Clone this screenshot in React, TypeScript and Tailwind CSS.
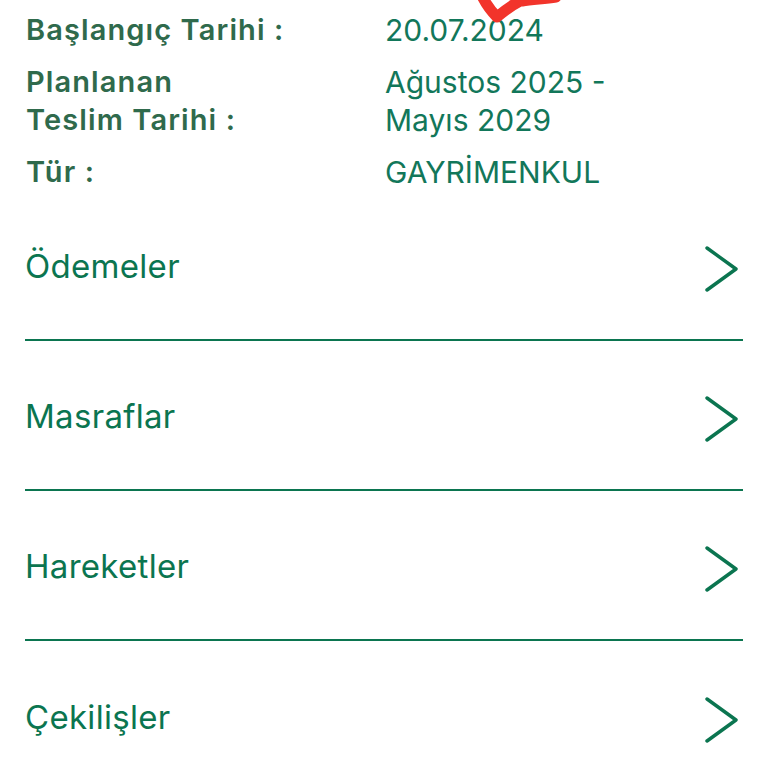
const details = [
  { label: ["Başlangıç Tarihi :"], value: ["20.07.2024"] },
  { label: ["Planlanan", "Teslim Tarihi :"], value: ["Ağustos 2025 -", "Mayıs 2029"] },
  { label: ["Tür :"], value: ["GAYRİMENKUL"] },
];

const menu = ["Ödemeler", "Masraflar", "Hareketler", "Çekilişler"];

function Chevron() {
  return (
    <svg width="36" height="46" viewBox="0 0 36 46" className="mr-[3px] mt-[7px]">
      <polyline points="3,2 32,23 3,44" fill="none" stroke="#0b7550" strokeWidth="3.4" strokeLinecap="round" strokeLinejoin="round" />
    </svg>
  );
}

export default function App() {
  return (
    <div className="relative w-[768px] h-[768px] overflow-hidden bg-white font-['Inter','Liberation_Sans',sans-serif]">
      {/* red pen mark from the original screenshot */}
      <svg className="absolute left-[470px] top-0" width="100" height="26" viewBox="0 0 100 26">
        <path
          d="M12 -4 C16 4 22 12 27 17 C33 12 40 6 50 1 M52 1 C62 -1 74 -1 86 -3"
          fill="none"
          stroke="#f2342b"
          strokeWidth="11"
          strokeLinecap="round"
          strokeLinejoin="round"
        />
      </svg>

      <div className="flex flex-col gap-[14px] pl-[26px] pt-[11px]">
        {details.map((d, i) => (
          <div key={i} className="flex leading-[38px]">
            <div className="w-[359px] text-[29px] font-semibold tracking-[1.1px] text-[#2f6a4c]">
              {d.label.map((l) => (
                <div key={l}>{l}</div>
              ))}
            </div>
            <div className="text-[30px] text-[#12775a]">
              {d.value.map((v) => (
                <div key={v}>{v}</div>
              ))}
            </div>
          </div>
        ))}
      </div>

      <div className="mx-[25px]">
        {menu.map((m, i) => (
          <div
            key={m}
            className={`flex items-center justify-between h-[150px] ${i < menu.length - 1 ? "border-b-2 border-[#0b7550]" : ""}`}
          >
            <span className="text-[33px] tracking-[0.3px] text-[#0b7550] pt-[4px]">{m}</span>
            <Chevron />
          </div>
        ))}
      </div>
    </div>
  );
}
